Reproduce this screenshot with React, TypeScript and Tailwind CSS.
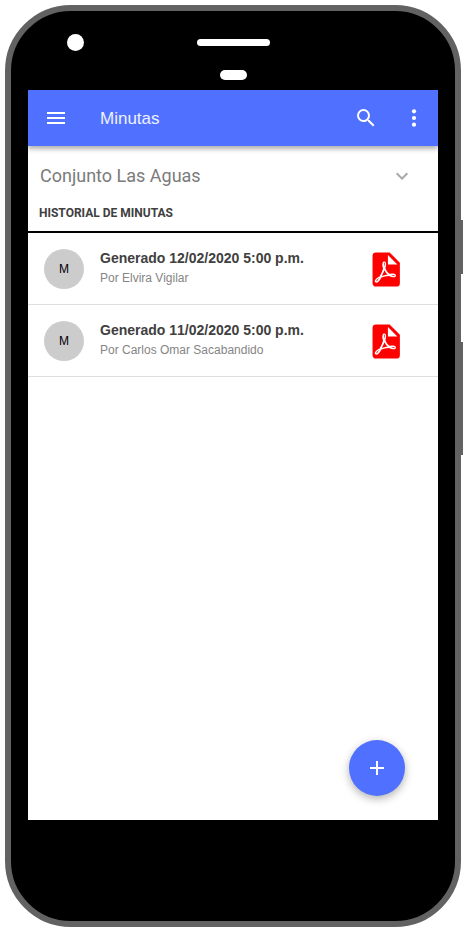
import { MdAdd, MdExpandMore, MdMenu, MdSearch } from 'react-icons/md';

const minutas = [
  { title: 'Generado 12/02/2020 5:00 p.m.', author: 'Por Elvira Vigilar' },
  { title: 'Generado 11/02/2020 5:00 p.m.', author: 'Por Carlos Omar Sacabandido' },
];

function PdfIcon() {
  return (
    <svg viewBox="0 0 24 24" className="mt-0.5 size-[41px] shrink-0" fill="#ff0000">
      <path d="M14,9H19.5L14,3.5V9M7,2H15L21,8V20A2,2 0 0,1 19,22H7C5.89,22 5,21.1 5,20V4A2,2 0 0,1 7,2M11.93,12.44C12.34,13.34 12.86,14.08 13.46,14.59L13.87,14.91C13,15.07 11.8,15.35 10.53,15.84V15.84L10.42,15.88L10.92,14.84C11.37,13.97 11.7,13.18 11.93,12.44M18.41,16.25C18.59,16.07 18.68,15.84 18.69,15.59C18.72,15.39 18.67,15.2 18.57,15.04C18.28,14.57 17.53,14.35 16.29,14.35L15,14.42L14.13,13.84C13.5,13.32 12.93,12.41 12.53,11.28L12.57,11.14C12.9,9.81 13.21,8.2 12.55,7.54C12.39,7.38 12.17,7.3 11.94,7.3H11.7C11.33,7.3 11,7.69 10.91,8.07C10.54,9.4 10.76,10.13 11.13,11.34V11.35C10.88,12.23 10.56,13.25 10.05,14.28L9.09,16.08L8.2,16.57C7,17.32 6.43,18.16 6.32,18.69C6.28,18.88 6.3,19.05 6.37,19.23L6.4,19.28L6.88,19.59L7.32,19.7C8.13,19.7 9.05,18.75 10.29,16.63L10.47,16.56C11.5,16.23 12.78,16 14.5,15.81C15.53,16.32 16.74,16.55 17.5,16.55C17.94,16.55 18.24,16.44 18.41,16.25M18,15.54L18.09,15.65C18.08,15.75 18.05,15.76 18,15.78H17.96L17.77,15.8C17.31,15.8 16.6,15.61 15.87,15.29C15.96,15.19 16,15.19 16.1,15.19C17.5,15.19 17.9,15.44 18,15.54M8.83,17C8.18,18.19 7.59,18.85 7.14,19C7.19,18.62 7.64,17.96 8.35,17.31L8.83,17M11.85,10.09C11.62,9.19 11.61,8.46 11.78,8.04L11.85,7.92L12,7.97C12.17,8.21 12.19,8.53 12.09,9.07L12.06,9.23L11.9,10.05L11.85,10.09Z" />
    </svg>
  );
}

function MoreIcon() {
  return (
    <svg viewBox="0 0 24 24" className="-mr-1 ml-6 size-6" fill="currentColor">
      <circle cx="12" cy="5.3" r="2.1" />
      <circle cx="12" cy="12" r="2.1" />
      <circle cx="12" cy="18.7" r="2.1" />
    </svg>
  );
}

export default function App() {
  return (
    <div className="h-[932px] w-[466px] overflow-hidden bg-white p-[5px] font-['Liberation_Sans',Arial,sans-serif]">
      <div className="relative h-[922px] w-[456px] rounded-[66px] border-6 border-[#636262] bg-black">
        <div className="absolute top-[209px] -right-2 h-[54px] w-0.5 bg-[#636262]" />
        <div className="absolute top-[331px] -right-2 h-[113px] w-0.5 bg-[#636262]" />

        <div className="flex h-[79px] flex-col pt-[23px]">
          <div className="flex h-[17px] items-center pl-14">
            <div className="size-[17px] rounded-full bg-white" />
            <div className="ml-[113px] h-[7px] w-[73px] rounded-full bg-white" />
          </div>
          <div className="mt-[19px] ml-[209px] h-2.5 w-[27px] rounded-full bg-white" />
        </div>

        <div className="relative ml-[17px] flex h-[730px] w-[410px] flex-col bg-white">
          <header className="flex h-14 shrink-0 items-center bg-[#5070ff] px-4 text-white shadow-[0_1px_8px_rgba(0,0,0,0.2),0_3px_4px_rgba(0,0,0,0.2)] [clip-path:inset(0_0_-12px_0)]">
            <MdMenu className="size-6" />
            <h1 className="ml-8 flex-1 pt-0.5 text-[17px] leading-6 text-white/90">Minutas</h1>
            <MdSearch className="size-6" />
            <MoreIcon />
          </header>

          <div className="flex h-[60px] shrink-0 items-center justify-between pr-6 pl-3 font-[Roboto,sans-serif] text-[18px] text-[#7b7b7b]">
            <span className="pb-0.5">Conjunto Las Aguas</span>
            <MdExpandMore className="size-6 text-[#a8a8a8]" />
          </div>

          <div className="h-[27px] shrink-0 border-b-2 border-black pl-[11px] font-[Roboto,sans-serif] text-[12px] leading-[14px] font-bold text-[#404040]">
            HISTORIAL DE MINUTAS
          </div>

          <ul>
            {minutas.map((minuta) => (
              <li key={minuta.title} className="flex h-[72px] items-center border-b border-[#dfdfdf] pr-[33px] pl-4">
                <div className="flex size-10 items-center justify-center rounded-full bg-[#cccccc] text-[12px] text-black">M</div>
                <div className="ml-4 flex-1 pb-0.5">
                  <p className="text-[14px] leading-5 font-bold text-[#404040] [font-kerning:none]">{minuta.title}</p>
                  <p className="text-[12px] leading-5 text-[#858585]">{minuta.author}</p>
                </div>
                <PdfIcon />
              </li>
            ))}
          </ul>

          <button className="absolute right-[33px] bottom-6 flex size-14 items-center justify-center rounded-full bg-[#5070ff] text-white shadow-[0_3px_8px_rgba(0,0,0,0.3)]">
            <MdAdd className="size-6" />
          </button>
        </div>
      </div>
    </div>
  );
}
